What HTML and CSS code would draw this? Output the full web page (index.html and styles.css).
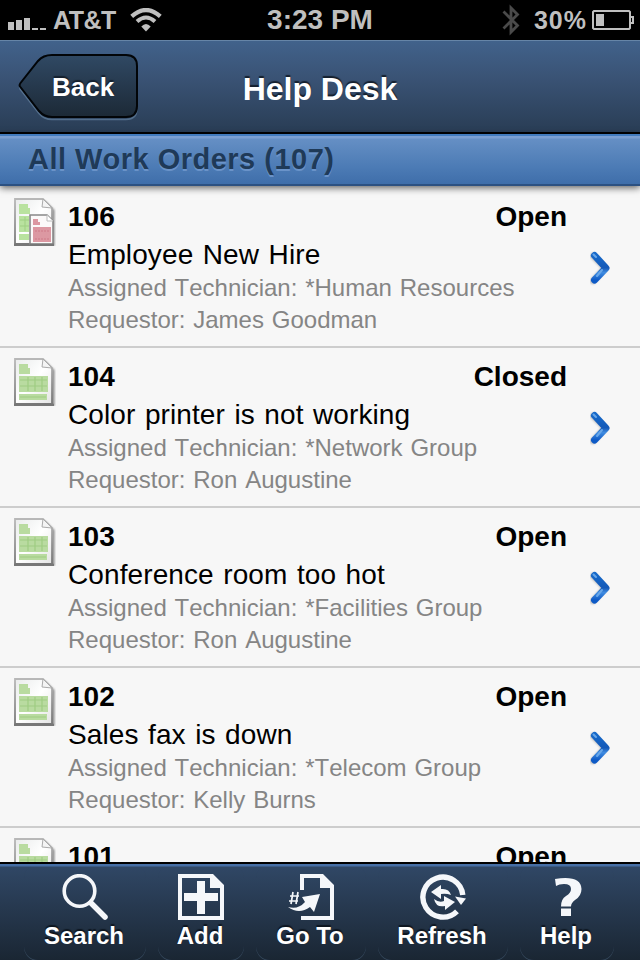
FILE: index.html
```html
<!DOCTYPE html>
<html lang="en">
<head>
<meta charset="utf-8">
<title>Help Desk</title>
<link rel="stylesheet" href="styles.css">
</head>
<body>
<svg class="defs" width="0" height="0" aria-hidden="true">
  <defs>
    <linearGradient id="paper" x1="0" y1="0" x2="1" y2="1"><stop offset="0" stop-color="#e9ebeb"/><stop offset=".5" stop-color="#fff"/><stop offset="1" stop-color="#e4e4e4"/></linearGradient>
    <linearGradient id="edge" x1="0" y1="0" x2="0" y2="1"><stop offset="0" stop-color="#b8b8b8"/><stop offset="1" stop-color="#777"/></linearGradient>
    <linearGradient id="button" x1="0" y1="0" x2="0" y2="1"><stop offset="0" stop-color="#304964"/><stop offset="1" stop-color="#1c2936"/></linearGradient>
    <linearGradient id="blue" x1="0" y1="0" x2="0" y2="1"><stop offset="0" stop-color="#1769c9"/><stop offset=".5" stop-color="#1459b8"/><stop offset=".7" stop-color="#408ce1"/><stop offset="1" stop-color="#0e5ac6"/></linearGradient>
    <filter id="soft" x="-20%" y="-20%" width="140%" height="140%"><feGaussianBlur stdDeviation=".9"/></filter>
    <symbol id="sheet" viewBox="0 0 42 48">
      <path d="M3 3H31L40.5 12V48H3Z" fill="#666" opacity=".75" filter="url(#soft)"/>
      <path d="M1 1H29L38 10V46H1Z" fill="url(#paper)" stroke="url(#edge)" stroke-width="1.8"/>
      <path d="M29 1L28 9L38 10Z" fill="#f4f4f4" stroke="#aaa"/>
      <path d="M0 46.8H40" stroke="#777" stroke-width="2.2"/>
    </symbol>
    <symbol id="doc" viewBox="0 0 42 48">
      <use href="#sheet" width="42" height="48"/>
      <path d="M5 6H14V10H16V16H5ZM5 18H34V34H5ZM5 36H33V42H5Z" fill="#b9dba0"/>
      <path d="M6 22H33M6 28H33M14 19V33M21 19V33M28 19V33M6 39H32" stroke="#9fcc82" stroke-width="1.2"/>
    </symbol>
    <symbol id="docs" viewBox="0 0 42 48">
      <use href="#sheet" width="42" height="48"/>
      <path d="M5 6H14V10H16V16H5ZM5 18H15V34H5ZM5 36H15V42H5Z" fill="#b9e29f"/>
      <path d="M6 22H15M6 28H15M11 19V33" stroke="#9fcf82"/>
      <path d="M16 17H33L39 23V46H16Z" fill="#fbf9f9" stroke="#888" stroke-width="1.6"/>
      <path d="M33 17V23H39" fill="#fff" stroke="#bbb"/>
      <path d="M19 21H24V24H26V27H19ZM19 29H37V44H19Z" fill="#dc98a2"/>
      <path d="M21 33H35M21 41H35" stroke="#ce7a88" stroke-dasharray="2 1"/>
      <path d="M16 46.7H40" stroke="#777" stroke-width="2"/>
    </symbol>
    <symbol id="chevron" viewBox="0 0 24 36">
      <path d="M5 6L17 18L5 31" fill="none" stroke="#777" stroke-width="6" opacity=".5" filter="url(#soft)" stroke-linecap="round"/>
      <path d="M6.5 5.5L18 18L6.5 30" fill="none" stroke="url(#blue)" stroke-width="7" stroke-linecap="round" stroke-linejoin="round"/>
      <path d="M5.5 4.5L8 7M9 26L14 20" stroke="#69a7e8" stroke-width="2" stroke-linecap="round"/>
    </symbol>
  </defs>
</svg>
<div class="screen">
  <div class="status">
    <div class="carrier">
      <svg class="signal" width="38" height="13" viewBox="0 0 38 13" fill="#bfbfbf"><path d="M0 5h6v8H0zM8 3h6v10H8zM16 1h6v12h-6zM24 11h6v2h-6zM32 11h6v2h-6z"/></svg>
      <span>AT&amp;T</span>
      <svg class="wifi" width="32" height="24" viewBox="0 0 32 24" fill="none" stroke="#bfbfbf"><path d="M1.7 8.3Q16-4.3 30.3 8.3" stroke-width="4.2"/><path d="M7 13.5Q16 5.5 25 13.5" stroke-width="4"/><path d="M16 23.5L11.3 18.6Q16 13.5 20.7 18.6Z" fill="#bfbfbf" stroke="none"/></svg>
    </div>
    <span class="clock">3:23 PM</span>
    <div class="power">
      <svg width="18" height="32" viewBox="0 0 18 32" fill="none" stroke="#4a4a4a" stroke-width="2.8"><path d="M1.5 7.5L15.5 21.5L9 28V4L15.5 10.5L1.5 24.5"/></svg>
      <span>30%</span>
      <svg class="battery" width="42" height="20" viewBox="0 0 42 20"><path d="M2 1H37L38 2V18L37 19H2L1 18V2Z" fill="none" stroke="#bfbfbf" stroke-width="2"/><path d="M38 7H41V13H38" fill="none" stroke="#bfbfbf" stroke-width="2"/><path d="M4 4h8v12H4z" fill="#bfbfbf"/></svg>
    </div>
  </div>
  <header class="nav">
    <div class="back">
      <svg class="back-shape" width="122" height="68" viewBox="0 0 122 68"><path d="M2 34.5Q1 32.5 2.5 30.5L20 9Q25 3 34 3H108Q119 3 119 14V54Q119 65 108 65H34Q26 65 21 59Z" fill="none" stroke="#62809e" stroke-width="1.5" opacity=".7" transform="translate(0 1.5)"/><path d="M2 33.5Q1 32 2.5 30L20 8Q25 2 34 2H108Q119 2 119 13V53Q119 64 108 64H34Q26 64 21 58Z" fill="url(#button)" stroke="#020508" stroke-width="2"/></svg>
      <span class="back-label">Back</span>
    </div>
    <h1>Help Desk</h1>
  </header>
  <div class="section">All Work Orders (107)</div>
  <main class="list">
    <article class="row"><svg class="icon"><use href="#docs"/></svg><div class="body"><div class="top"><b>106</b><b>Open</b></div><div class="subject">Employee New Hire</div><div class="meta">Assigned Technician: *Human Resources</div><div class="meta">Requestor: James Goodman</div></div><svg class="chevron"><use href="#chevron"/></svg></article>
    <article class="row"><svg class="icon"><use href="#doc"/></svg><div class="body"><div class="top"><b>104</b><b>Closed</b></div><div class="subject">Color printer is not working</div><div class="meta">Assigned Technician: *Network Group</div><div class="meta">Requestor: Ron Augustine</div></div><svg class="chevron"><use href="#chevron"/></svg></article>
    <article class="row"><svg class="icon"><use href="#doc"/></svg><div class="body"><div class="top"><b>103</b><b>Open</b></div><div class="subject">Conference room too hot</div><div class="meta">Assigned Technician: *Facilities Group</div><div class="meta">Requestor: Ron Augustine</div></div><svg class="chevron"><use href="#chevron"/></svg></article>
    <article class="row"><svg class="icon"><use href="#doc"/></svg><div class="body"><div class="top"><b>102</b><b>Open</b></div><div class="subject">Sales fax is down</div><div class="meta">Assigned Technician: *Telecom Group</div><div class="meta">Requestor: Kelly Burns</div></div><svg class="chevron"><use href="#chevron"/></svg></article>
    <article class="row"><svg class="icon"><use href="#doc"/></svg><div class="body"><div class="top"><b>101</b><b>Open</b></div></div></article>
  </main>
  <footer class="toolbar">
    <div class="tool search"><svg width="46" height="46" viewBox="0 0 46 46" fill="none" stroke="#f5f7fa"><circle cx="17.5" cy="17" r="15.3" stroke-width="3.6"/><path d="M29 29L43 43" stroke-width="5.5" stroke-linecap="round"/></svg><span>Search</span></div>
    <div class="tool add"><svg width="46" height="46" viewBox="0 0 46 46"><path d="M0 0H35L46 11V46H0ZM4 4V42H42V14H32V4Z" fill="#f5f7fa" fill-rule="evenodd"/><path d="M19 7h8v12h13v8H27v13h-8V27H6v-8h13z" fill="#f5f7fa"/></svg><span>Add</span></div>
    <div class="tool goto"><svg width="46" height="46" viewBox="0 0 46 46"><path d="M12 16V0H35L46 11V46H13V42H42V14H32V4H16V16Z" fill="#f5f7fa"/><path d="M5 18L3 30M10 18L8 30M2 22H11M1 27H10" stroke="#f5f7fa" stroke-width="1.7"/><path d="M0 33Q10 36 17 28L14 23L32 20L26 38L22 33Q11 41 0 33Z" fill="#f5f7fa"/></svg><span>Go To</span></div>
    <div class="tool refresh"><svg width="46" height="46" viewBox="0 0 46 46"><path d="M37 37.3A20 20 0 1 1 42.8 21" fill="none" stroke="#f5f7fa" stroke-width="5.4"/><path d="M35 22.5L46 24.5L41 31Z" fill="#f5f7fa"/><path d="M11 18L21 11V15Q29 14 31 21Q26 19 21 20V25ZM14 25Q19 29 24 27V22L35 28L25 36V32Q16 34 14 25Z" fill="#f5f7fa"/></svg><span>Refresh</span></div>
    <div class="tool help"><svg width="46" height="46" viewBox="0 0 46 46"><path d="M11 5Q37 1 37.5 15Q37.5 22 31 26Q27 29 27 32.5H17Q17 25 22 22Q27 19 27 15Q27 10 20 10Q15 10 12 12ZM17 34.5H27V42H17Z" fill="#f5f7fa"/></svg><span>Help</span></div>
  </footer>
</div>
</body>
</html>
```
FILE: styles.css
```css
* { box-sizing: border-box; }
body { margin: 0; font-family: "Liberation Sans", Arial, sans-serif; background: #f7f7f7; }
svg { display: block; flex: none; }
.defs { position: absolute; }
.screen { width: 640px; height: 960px; overflow: hidden; display: flex; flex-direction: column; }
.status { height: 40px; background: #000; color: #bfbfbf; display: grid; grid-template-columns: 1fr auto 1fr; align-items: center; font-weight: bold; padding: 0 6px 0 6px; flex: none; }
.carrier { display: flex; align-items: center; font-size: 25px; line-height: 40px; letter-spacing: -.5px; padding-left: 2px; }
.signal { margin: 6px 7px 0 0; }
.wifi { margin-left: 14px; }
.clock { font-size: 28px; line-height: 40px; }
.power { display: flex; align-items: center; justify-content: flex-end; font-size: 25px; letter-spacing: 1px; line-height: 38px; }
.power span { margin-left: 14px; }
.battery { margin-left: 5px; }
.nav { height: 94px; flex: none; border-top: 1px solid #6685a7; border-bottom: 2px solid #000; background: linear-gradient(#41628b, #3a5375 40%, #293d55); display: grid; grid-template-columns: 1fr auto 1fr; align-items: start; color: #fff; text-shadow: 0 -2px 1px #15202e; }
.back { display: grid; width: 122px; height: 68px; margin: 12px 0 0 18px; }
.back-shape, .back-label { grid-area: 1 / 1; }
.back-label { font-size: 26px; font-weight: bold; line-height: 68px; padding-left: 34px; }
h1 { margin: 0; font-size: 32px; line-height: 96px; font-weight: bold; }
.section { height: 52px; flex: none; border-top: 2px solid #427bbd; border-bottom: 2px solid #2c5182; background: linear-gradient(#7b9fd1 0 2px, #658fc4 3px, #4c7bb5 65%, #3f6eaa); color: #1f3a58; font-size: 29px; font-weight: bold; line-height: 47px; padding-left: 28px; letter-spacing: .5px; text-shadow: 0 2px 0 #6a93c9; position: relative; box-shadow: 0 2px 7px rgba(0,0,0,.6); }
.list { height: 676px; flex: none; padding-top: 2px; overflow: hidden; background: #f7f7f7; }
.row { height: 160px; border-bottom: 2px solid #cdcdcd; display: flex; padding-left: 14px; }
.icon { width: 42px; height: 48px; margin: 10px 12px 0 0; }
.body { width: 499px; padding-top: 10px; white-space: nowrap; font-kerning: none; }
.top { display: flex; justify-content: space-between; font-size: 28px; line-height: 38px; }
.subject { font-size: 28px; line-height: 38px; margin-bottom: -2px; word-spacing: 1.6px; letter-spacing: .1px; }
.meta { color: #858585; font-size: 24px; line-height: 32px; word-spacing: 1.2px; }
.chevron { width: 24px; height: 36px; margin: 62px 0 0 21px; }
.toolbar { height: 98px; flex: none; border-top: 2px solid #000; background: linear-gradient(#466fa6 0 2px, #304765 3px, #1a2633); display: flex; gap: 12px; padding-left: 24px; color: #fff; }
.tool { height: 96px; padding-top: 10px; display: flex; flex-direction: column; align-items: center; font-size: 24px; font-weight: bold; line-height: 32px; text-shadow: 0 -2px 1px #0e1620; border-radius: 14px; box-shadow: 0 1px 0 #34475b; white-space: nowrap; }
.tool span { margin-left: -2px; }
.search { width: 122px; }
.add { width: 86px; }
.goto { width: 110px; }
.refresh { width: 130px; }
.help { width: 94px; }
```
